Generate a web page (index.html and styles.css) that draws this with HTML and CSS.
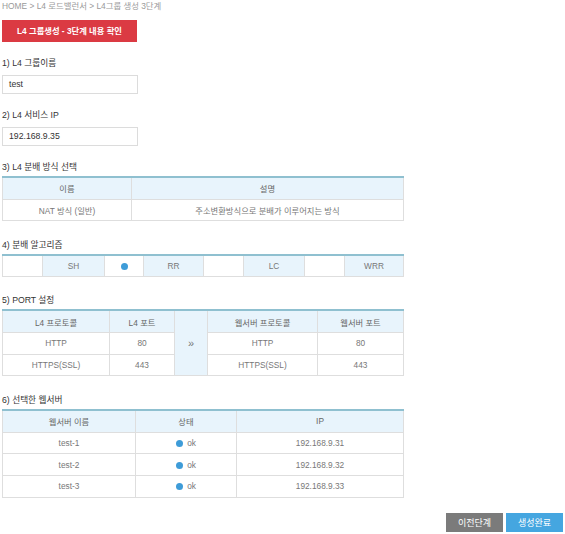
FILE: index.html
```html
<!DOCTYPE html>
<html lang="ko">
<head>
<meta charset="utf-8">
<link rel="stylesheet" href="styles.css">
</head>
<body>
<div class="page">
  <div class="crumb">HOME &gt; L4 로드밸런서 &gt; L4그룹 생성 3단계</div>
  <div class="title">L4 그룹생성 - 3단계 내용 확인</div>

  <div class="label">1) L4 그룹이름</div>
  <div class="field">test</div>

  <div class="label">2) L4 서비스 IP</div>
  <div class="field">192.168.9.35</div>

  <div class="label">3) L4 분배 방식 선택</div>
  <table class="tbl">
    <colgroup><col style="width:129px"><col></colgroup>
    <tr><th>이름</th><th>설명</th></tr>
    <tr><td>NAT 방식 (일반)</td><td>주소변환방식으로 분배가 이루어지는 방식</td></tr>
  </table>

  <div class="label after">4) 분배 알고리즘</div>
  <table class="tbl algo">
    <colgroup>
      <col style="width:40px"><col style="width:62px">
      <col style="width:39px"><col style="width:60px">
      <col style="width:40px"><col style="width:61px">
      <col style="width:40px"><col>
    </colgroup>
    <tr>
      <td></td><td class="hl">SH</td>
      <td><span class="dot"></span></td><td class="hl">RR</td>
      <td></td><td class="hl">LC</td>
      <td></td><td class="hl">WRR</td>
    </tr>
  </table>

  <div class="label after">5) PORT 설정</div>
  <table class="tbl">
    <colgroup>
      <col style="width:107px"><col style="width:65px">
      <col style="width:33px"><col style="width:110px"><col>
    </colgroup>
    <tr><th>L4 프로토콜</th><th>L4 포트</th><td class="arrow" rowspan="3">&raquo;</td><th>웹서버 프로토콜</th><th>웹서버 포트</th></tr>
    <tr><td>HTTP</td><td>80</td><td>HTTP</td><td>80</td></tr>
    <tr><td>HTTPS(SSL)</td><td>443</td><td>HTTPS(SSL)</td><td>443</td></tr>
  </table>

  <div class="label after">6) 선택한 웹서버</div>
  <table class="tbl">
    <colgroup><col style="width:133px"><col style="width:101px"><col></colgroup>
    <tr><th>웹서버 이름</th><th>상태</th><th>IP</th></tr>
    <tr><td>test-1</td><td><span class="dot"></span> ok</td><td>192.168.9.31</td></tr>
    <tr><td>test-2</td><td><span class="dot"></span> ok</td><td>192.168.9.32</td></tr>
    <tr><td>test-3</td><td><span class="dot"></span> ok</td><td>192.168.9.33</td></tr>
  </table>

  <div class="actions">
    <button class="btn prev">이전단계</button>
    <button class="btn done">생성완료</button>
  </div>
</div>
</body>
</html>
```

FILE: styles.css
```css
html, body {
  margin: 0;
  padding: 0;
  background: #fff;
}
body {
  font-family: "Liberation Sans", "Noto Sans CJK KR", sans-serif;
  font-size: 9px;
  color: #333;
}
.page {
  width: 561px;
  padding: 0 2px;
}
.crumb {
  color: #9a9a9a;
  font-size: 8.4px;
  line-height: 12px;
  height: 12px;
}
.title {
  margin-top: 8px;
  width: 135px;
  height: 22px;
  line-height: 22px;
  background: #db3a43;
  color: #fff;
  font-weight: bold;
  text-align: center;
  font-size: 8.3px;
}
.label {
  margin-top: 15px;
  line-height: 12px;
  font-size: 8.7px;
  color: #333;
}
.label.after {
  margin-top: 17.5px;
}
.field {
  margin-top: 6px;
  width: 128px;
  height: 17px;
  line-height: 17px;
  border: 1px solid #dcdcdc;
  padding-left: 6px;
  color: #333;
  font-size: 8.7px;
}
.tbl {
  margin-top: 3px;
  width: 402px;
  border-collapse: collapse;
  table-layout: fixed;
  border-top: 2px solid #8fc0d0;
}
.tbl th, .tbl td {
  border: 1px solid #dedede;
  height: 20.7px;
  padding: 0;
  text-align: center;
  color: #777;
  font-weight: normal;
  font-size: 8.3px;
}
.tbl.algo td {
  height: 20px;
}
.tbl tr:first-child th, .tbl tr:first-child td {
  border-top: none;
}
.tbl th {
  background: #e8f4fc;
  color: #666;
}
.tbl td.hl, .tbl td.arrow {
  background: #e8f4fc;
}
.tbl td.arrow {
  color: #777;
  font-size: 11px;
}
.dot {
  display: inline-block;
  width: 7px;
  height: 7px;
  border-radius: 50%;
  background: #3e9cd8;
  vertical-align: -1px;
  margin-right: 2px;
}
.algo td .dot {
  margin-right: 0;
}
.actions {
  margin-top: 15px;
  display: flex;
  justify-content: flex-end;
  gap: 3px;
}
.btn {
  border: none;
  height: 19px;
  width: 57px;
  padding: 0;
  color: #fff;
  font-family: "Liberation Sans", "Noto Sans CJK KR", sans-serif;
  font-size: 9px;
}
.prev { background: #7b7b7b; }
.done { background: #45a6e0; }
```
